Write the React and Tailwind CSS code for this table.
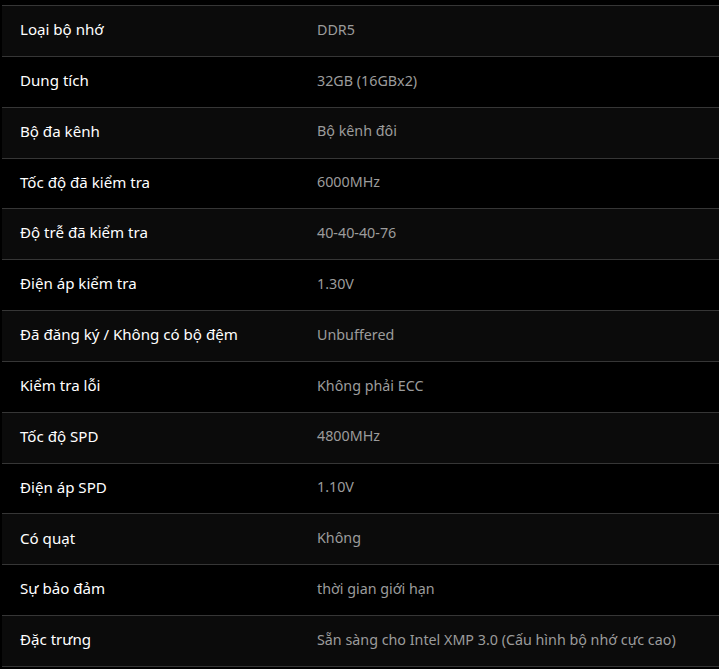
import React from "react";

const rows = [
  ["Loại bộ nhớ", "DDR5"],
  ["Dung tích", "32GB (16GBx2)"],
  ["Bộ đa kênh", "Bộ kênh đôi"],
  ["Tốc độ đã kiểm tra", "6000MHz"],
  ["Độ trễ đã kiểm tra", "40-40-40-76"],
  ["Điện áp kiểm tra", "1.30V"],
  ["Đã đăng ký / Không có bộ đệm", "Unbuffered"],
  ["Kiểm tra lỗi", "Không phải ECC"],
  ["Tốc độ SPD", "4800MHz"],
  ["Điện áp SPD", "1.10V"],
  ["Có quạt", "Không"],
  ["Sự bảo đảm", "thời gian giới hạn"],
  ["Đặc trưng", "Sẵn sàng cho Intel XMP 3.0 (Cấu hình bộ nhớ cực cao)"],
];

export default function App() {
  return (
    <div className="w-[719px] h-[669px] bg-black overflow-hidden pt-[5px] pl-[2px]" style={{ fontFamily: '"Noto Sans", sans-serif' }}>
      <div className="border-t border-[#363636]">
        {rows.map(([k, v], i) => (
          <div
            key={i}
            className={`flex items-center h-[50.85px] pb-[3px] border-b border-[#363636] ${i % 2 === 0 ? "bg-[#0b0b0b]" : "bg-black"}`}
          >
            <div className="w-[315px] pl-[18px] text-[15.1px] text-white">{k}</div>
            <div className="text-[14.3px] text-[#9c9c9c]">{v}</div>
          </div>
        ))}
      </div>
    </div>
  );
}
